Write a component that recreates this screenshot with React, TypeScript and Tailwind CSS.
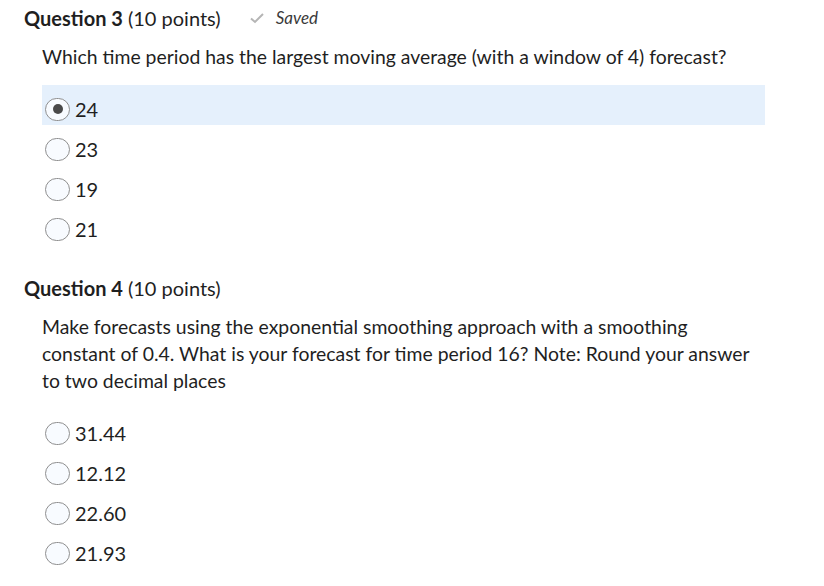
import React from "react";

const font = { fontFamily: "Lato, 'Open Sans', sans-serif" };

function Radio({ checked }: { checked?: boolean }) {
  return (
    <span className="flex items-center justify-center w-[25px] h-[23px] rounded-full border border-[#8f8f8f] bg-[#f8fbff] shrink-0">
      {checked && <span className="w-[10px] h-[10px] rounded-full bg-[#4a4a4a]" />}
    </span>
  );
}

function Option({ label, checked }: { label: string; checked?: boolean }) {
  return (
    <div className={`flex items-center h-[40px] pt-[8px] pl-[3px] gap-[5px] ${checked ? "bg-[#e5f0fc]" : ""}`}>
      <Radio checked={checked} />
      <span className="text-[20px] text-[#1f1f1f]">{label}</span>
    </div>
  );
}

function Header({ num, saved }: { num: number; saved?: boolean }) {
  return (
    <div className="flex items-center h-[24px] text-[20px] text-[#1f1f1f]">
      <span className="font-bold">Question {num}</span>
      <span className="ml-[5px]">(10 points)</span>
      {saved && (
        <span className="flex items-center ml-[28px] text-[17px] italic text-[#3a3a3a]">
          <svg width="16" height="14" viewBox="0 0 16 14" className="mr-[11px]">
            <path d="M2 7.5 L6 11 L14 3" fill="none" stroke="#b5b5b5" strokeWidth="2" />
          </svg>
          Saved
        </span>
      )}
    </div>
  );
}

export default function App() {
  return (
    <div className="w-[824px] h-[586px] bg-white overflow-hidden pl-[24px] pt-[6px]" style={font}>
      <Header num={3} saved />
      <div className="pl-[18px] w-[741px]">
        <p className="mt-[14px] text-[19.4px] leading-[26px] text-[#1f1f1f]">
          Which time period has the largest moving average (with a window of 4) forecast?
        </p>
        <div className="mt-[15px]">
          <Option label="24" checked />
          <Option label="23" />
          <Option label="19" />
          <Option label="21" />
        </div>
      </div>

      <div className="mt-[31px]">
        <Header num={4} />
      </div>
      <div className="pl-[18px] w-[741px]">
        <p className="mt-[13px] w-[716px] text-[19.4px] leading-[27px] text-[#1f1f1f]">
          Make forecasts using the exponential smoothing approach with a smoothing constant of 0.4. What is your forecast for time period 16? Note: Round your answer to two decimal places
        </p>
        <div className="mt-[15px]">
          <Option label="31.44" />
          <Option label="12.12" />
          <Option label="22.60" />
          <Option label="21.93" />
        </div>
      </div>
    </div>
  );
}
